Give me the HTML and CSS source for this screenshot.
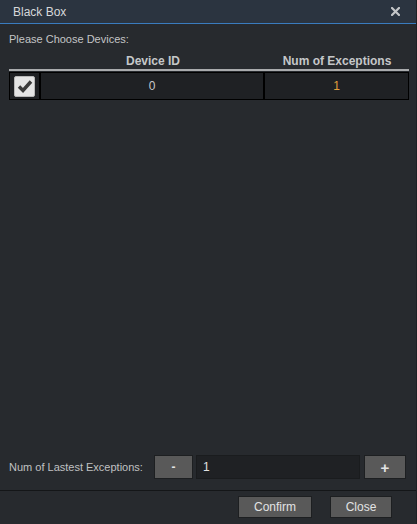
FILE: index.html
```html
<!DOCTYPE html>
<html>
<head>
<meta charset="utf-8">
<link rel="stylesheet" href="styles.css">
</head>
<body>
<div class="dialog">
  <div class="titlebar">
    <span class="title">Black Box</span>
    <svg class="close-x" width="9" height="9" viewBox="0 0 9 9"><path d="M1 1 L8 8 M8 1 L1 8" stroke="#c4c6c8" stroke-width="2.2" stroke-linecap="square"/></svg>
  </div>
  <div class="content">
    <div class="prompt">Please Choose Devices:</div>
    <div class="thead">
      <div class="c-check"></div>
      <div class="c-id">Device ID</div>
      <div class="c-num">Num of Exceptions</div>
    </div>
    <div class="trow">
      <div class="c-check cell"><span class="checkbox"><svg width="16" height="14" viewBox="0 0 16 14"><path d="M2 7.5 L6 11.5 L14 2.5" fill="none" stroke="#3a3a3a" stroke-width="3.4" stroke-linejoin="miter"/></svg></span></div>
      <div class="c-id cell">0</div>
      <div class="c-num cell orange">1</div>
    </div>
    <div class="spacer"></div>
    <div class="latest">
      <span class="latest-label">Num of Lastest Exceptions:</span>
      <button class="btn step">-</button>
      <div class="input">1</div>
      <button class="btn step plus">+</button>
    </div>
  </div>
  <div class="footer">
    <button class="btn fbtn confirm">Confirm</button>
    <button class="btn fbtn close">Close</button>
  </div>
</div>
</body>
</html>
```
FILE: styles.css
```css
* { box-sizing: border-box; }
html, body { margin: 0; padding: 0; background: #272a2e; }
body { font-family: "Liberation Sans", Arial, sans-serif; font-size: 12px; color: #c9cacb; }
.dialog { width: 417px; height: 524px; display: flex; flex-direction: column; background: #272a2e; border-right: 1px solid #1d2024; }
.titlebar { height: 24px; flex: none; background: #2b3440; border-bottom: 1px solid #3a7cbf; display: flex; align-items: center; justify-content: space-between; padding: 0 16px 0 13px; }
.title { color: #d6d8da; font-size: 12px; }
.close-x { display: block; margin-top: -1px; }
.content { flex: 1; display: flex; flex-direction: column; padding: 8px 7px 0 9px; }
.prompt { font-size: 11px; color: #c4c5c6; line-height: 14px; }
.thead { display: flex; height: 25px; align-items: center; border-bottom: 2px solid #a9abad; padding-top: 7px; font-weight: bold; color: #c5c7c9; font-size: 12px; }
.c-check { width: 32px; flex: none; }
.c-id { width: 224px; flex: none; text-align: center; }
.c-num { flex: 1; text-align: center; }
.trow { display: flex; height: 28px; background: #000; border: 1px solid #000; gap: 2px; margin-top: 1px; }
.cell { background: #1f2124; display: flex; align-items: center; justify-content: center; color: #c8c9ca; }
.trow .c-check { width: 29px; }
.trow .c-id { width: 222px; }
.orange { color: #e3a03c; }
.checkbox { width: 21px; height: 21px; background: #e4e4e4; border: 1px solid #b8b8b8; border-radius: 2px; display: flex; align-items: center; justify-content: center; }
.checkbox svg { display: block; }
.spacer { flex: 1; }
.latest { display: flex; align-items: center; height: 24px; margin-bottom: 11px; }
.latest-label { color: #c0c1c2; font-size: 11px; width: 145px; flex: none; }
.btn { font-family: "Liberation Sans", Arial, sans-serif; font-size: 12px; color: #e2e3e4; background: #595959; border: 1px solid #1d1f21; padding: 0; margin: 0; cursor: default; }
.step { width: 39px; height: 24px; font-weight: bold; }
.input { width: 164px; height: 24px; margin: 0 4px 0 3px; background: #1f2124; border: 1px solid #1a1c1e; color: #e0e1e2; display: flex; align-items: center; padding-left: 6px; }
.plus { width: 42px; font-size: 15px; }
.footer { height: 34px; flex: none; border-top: 1px solid #141618; display: flex; align-items: flex-start; padding-top: 5px; padding-left: 238px; }
.fbtn { height: 22px; }
.confirm { width: 74px; }
.close { width: 62px; margin-left: 18px; }
```
